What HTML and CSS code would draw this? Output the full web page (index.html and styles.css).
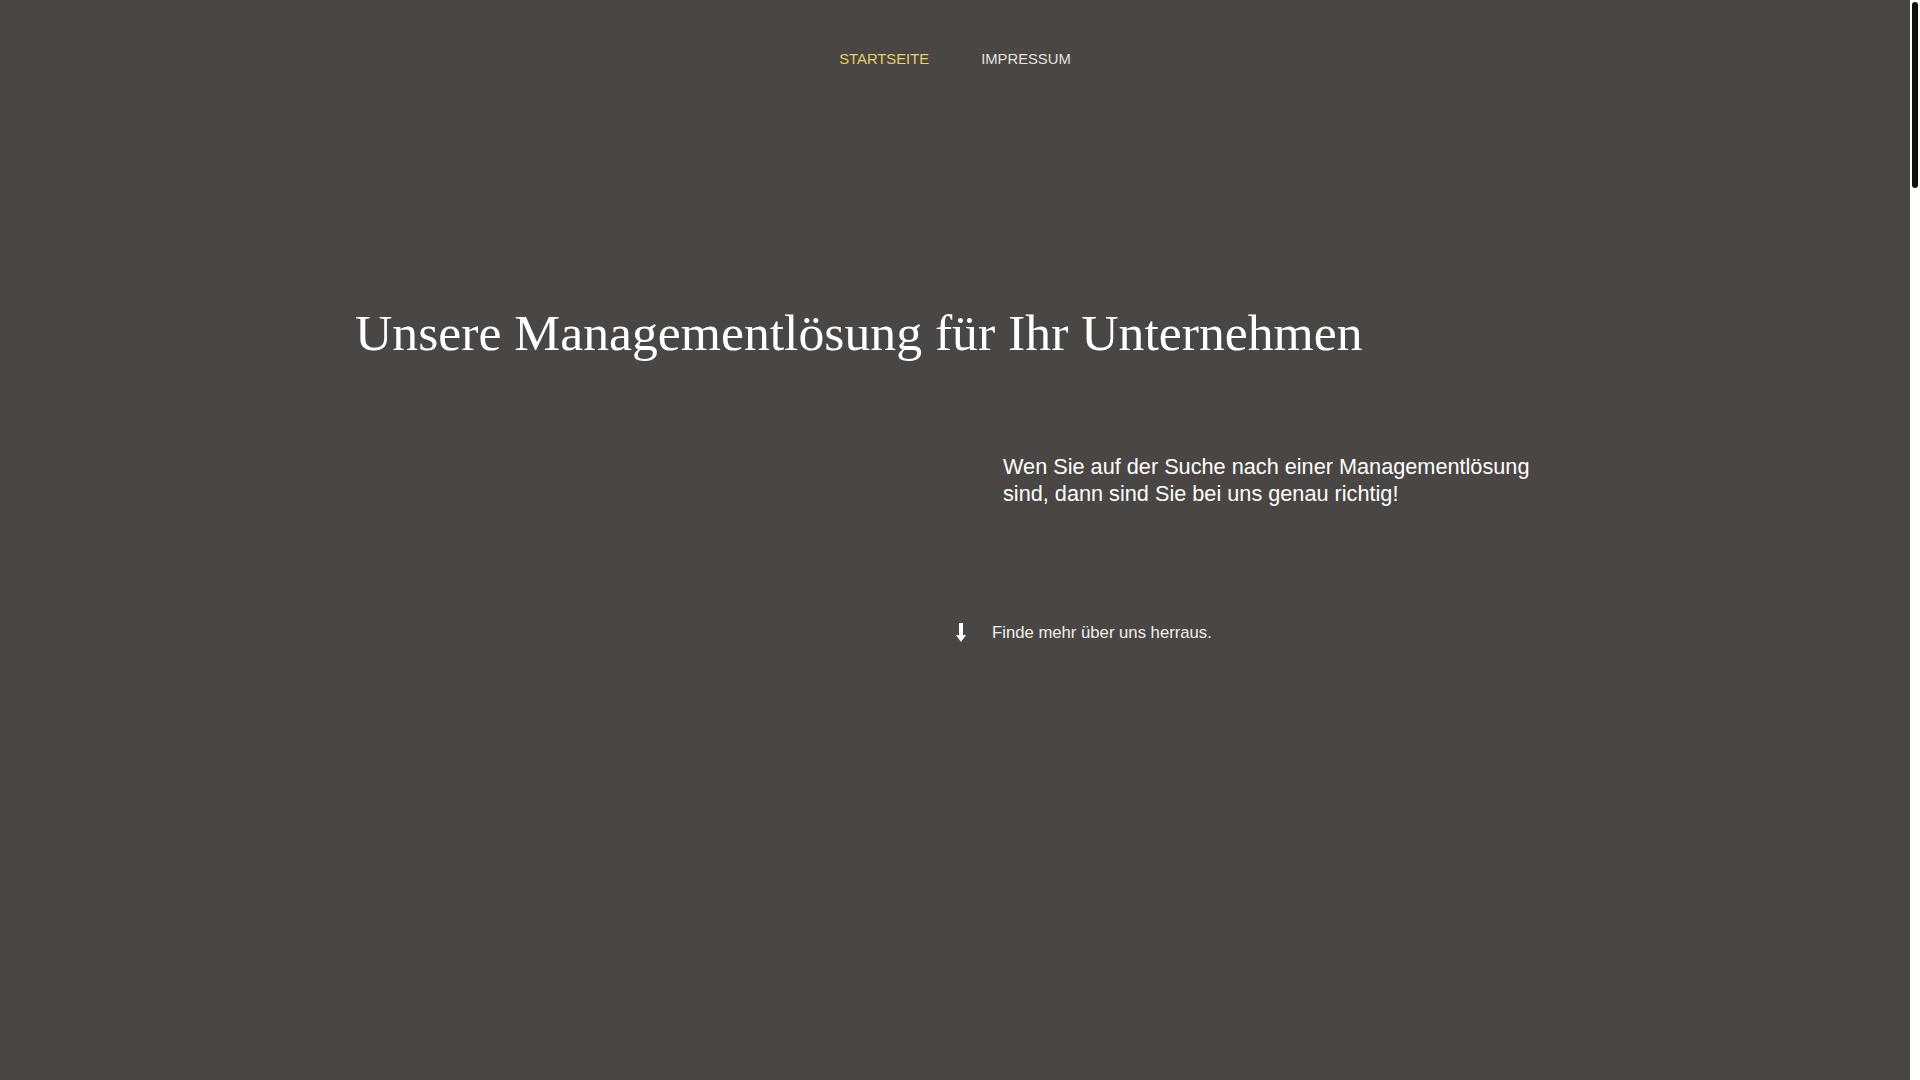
FILE: index.html
```html
<!DOCTYPE html>
<html lang="de">
<head>
<meta charset="utf-8">
<title>Managementlösung</title>
<link rel="stylesheet" href="styles.css">
</head>
<body>
<div class="viewport">
  <div class="page">
    <header class="site-header">
      <nav class="main-nav">
        <a class="nav-link active" href="#">STARTSEITE</a>
        <a class="nav-link" href="#">IMPRESSUM</a>
      </nav>
    </header>
    <main class="hero">
      <div class="container">
        <h1 class="hero-title">Unsere Managementlösung für Ihr Unternehmen</h1>
        <div class="hero-grid">
          <div class="hero-left"></div>
          <div class="hero-right">
            <p class="hero-text">Wen Sie auf der Suche nach einer Managementlösung sind, dann sind Sie bei uns genau richtig!</p>
          </div>
        </div>
        <div class="more-row">
          <div class="more-spacer"></div>
          <a class="more-link" href="#">
            <svg class="more-icon" width="10" height="20" viewBox="0 0 10 20" aria-hidden="true">
              <rect x="3" y="0" width="4" height="13" fill="#ffffff"/>
              <polygon points="0,12 10,12 5,19" fill="#ffffff"/>
            </svg>
            <span>Finde mehr über uns herraus.</span>
          </a>
        </div>
      </div>
    </main>
  </div>
  <div class="scrollbar" aria-hidden="true">
    <div class="scrollbar-thumb"></div>
  </div>
</div>
</body>
</html>
```

FILE: styles.css
```css
html, body {
  margin: 0;
  height: 100%;
  overflow: hidden;
  background: #4a4643;
}
body {
  color: #ffffff;
  font-family: "Liberation Sans", Arial, sans-serif;
}
.viewport {
  display: flex;
  height: 100vh;
}
.page {
  flex: 1;
  min-width: 0;
  background: #4a4643;
}
.scrollbar {
  width: 10px;
  flex: none;
  background: #ffffff;
  padding: 2px 2px 0 2px;
  box-sizing: border-box;
}
.scrollbar-thumb {
  height: 186px;
  background: #111111;
  border-radius: 3px;
}
.site-header {
  padding-top: 51px;
}
.main-nav {
  display: flex;
  justify-content: center;
  gap: 52px;
}
.nav-link {
  font-size: 14.8px;
  line-height: 17px;
  color: #e4e2df;
  text-decoration: none;
}
.nav-link.active {
  color: #e9cd6b;
}
.hero {
  padding-top: 235px;
}
.container {
  width: 1200px;
  margin: 0 auto;
}
.hero-title {
  margin: 0;
  font-family: "Liberation Serif", "Times New Roman", serif;
  font-weight: 400;
  font-size: 51.7px;
  line-height: 60px;
  color: #ffffff;
}
.hero-grid {
  display: grid;
  grid-template-columns: 600px 600px;
  margin-top: 90px;
}
.hero-right {
  padding-left: 48px;
}
.hero-text {
  margin: 0;
  font-size: 21.7px;
  line-height: 27px;
  color: #ffffff;
}
.more-row {
  display: grid;
  grid-template-columns: 600px 600px;
  margin-top: 116px;
}
.more-link {
  display: flex;
  align-items: center;
  gap: 26px;
  padding-left: 1px;
  color: #f0efed;
  text-decoration: none;
  font-size: 16.7px;
  line-height: 20px;
}
.more-icon {
  display: block;
  flex: none;
}
```
